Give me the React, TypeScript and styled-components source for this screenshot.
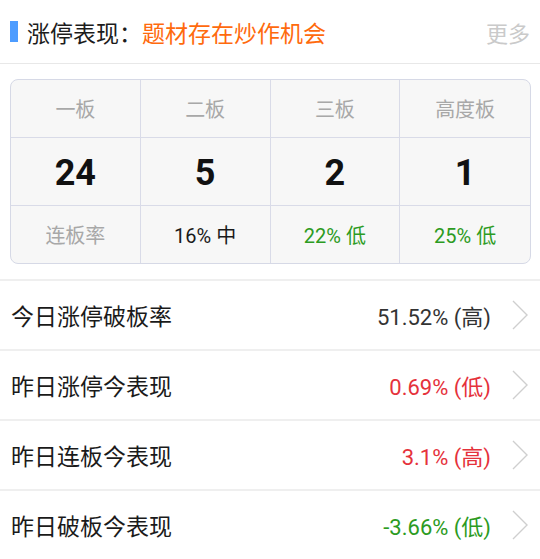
import React from "react";
import styled, { createGlobalStyle } from "styled-components";

const Global = createGlobalStyle`
  html, body { margin: 0; padding: 0; background: #fff; }
  body { font-family: Roboto, "Noto Sans CJK SC", sans-serif; -webkit-font-smoothing: antialiased; }
  * { box-sizing: border-box; }
`;

const Page = styled.div`
  width: 540px;
  background: #fff;
`;

const Header = styled.div`
  height: 64px;
  display: flex;
  align-items: center;
  padding: 0 10px 0 10px;
  border-bottom: 1px solid #e8e8e8;
`;

const Bar = styled.span`
  width: 8px;
  height: 21px;
  background: #4d9cff;
  margin-right: 9px;
  flex: none;
`;

const Title = styled.span<{ $accent?: boolean }>`
  font-size: 23px;
  color: ${(p) => (p.$accent ? "#ff6a0d" : "#1c1c1c")};
  white-space: nowrap;
`;

const More = styled.span`
  margin-left: auto;
  font-size: 22px;
  color: #cacaca;
`;

const TableWrap = styled.div`
  padding: 15px 9px 15px 10px;
`;

const Table = styled.div`
  display: grid;
  grid-template-columns: repeat(4, 1fr);
  grid-template-rows: 58px 68px 57px;
  border: 1px solid #d6d9e6;
  border-radius: 8px;
  background: #f7f7f7;
  overflow: hidden;
`;

type Tone = "label" | "num" | "dark" | "green";

const toneColor: Record<Tone, string> = {
  label: "#a8a8a8",
  num: "#111",
  dark: "#1a1a1a",
  green: "#2c9b22",
};

const Cell = styled.div<{ $tone: Tone; $last: boolean; $bottom: boolean }>`
  display: flex;
  align-items: center;
  justify-content: center;
  border-right: ${(p) => (p.$last ? "none" : "1px solid #d9dbe8")};
  border-bottom: ${(p) => (p.$bottom ? "none" : "1px solid #d9dbe8")};
  color: ${(p) => toneColor[p.$tone]};
  font-size: ${(p) => (p.$tone === "num" ? "36px" : "20px")};
  font-weight: ${(p) => (p.$tone === "num" ? 700 : 400)};
  padding-top: ${(p) => (p.$tone === "num" ? "2px" : "0")};
`;

const List = styled.div`
  display: flex;
  flex-direction: column;
`;

const Row = styled.div`
  height: 70px;
  border-top: 2px solid #efefef;
  display: flex;
  align-items: center;
  padding: 0 12px 0 11px;
`;

const Label = styled.span`
  font-size: 23px;
  color: #1a1a1a;
`;

type VTone = "neutral" | "red" | "green";
const vColor: Record<VTone, string> = {
  neutral: "#333",
  red: "#e5323b",
  green: "#2c9b22",
};

const Value = styled.span<{ $tone: VTone }>`
  margin-left: auto;
  font-size: 22px;
  color: ${(p) => vColor[p.$tone]};
  margin-right: 21px;
`;

const Chevron = () => (
  <svg width="16" height="30" viewBox="0 0 16 30" style={{ flex: "none" }}>
    <polyline points="1,1 15,15 1,29" fill="none" stroke="#cfcfcf" strokeWidth="1.4" />
  </svg>
);

const table: { text: string; tone: Tone }[][] = [
  [
    { text: "一板", tone: "label" },
    { text: "二板", tone: "label" },
    { text: "三板", tone: "label" },
    { text: "高度板", tone: "label" },
  ],
  [
    { text: "24", tone: "num" },
    { text: "5", tone: "num" },
    { text: "2", tone: "num" },
    { text: "1", tone: "num" },
  ],
  [
    { text: "连板率", tone: "label" },
    { text: "16% 中", tone: "dark" },
    { text: "22% 低", tone: "green" },
    { text: "25% 低", tone: "green" },
  ],
];

const rows: { label: string; value: string; tone: VTone }[] = [
  { label: "今日涨停破板率", value: "51.52% (高)", tone: "neutral" },
  { label: "昨日涨停今表现", value: "0.69% (低)", tone: "red" },
  { label: "昨日连板今表现", value: "3.1% (高)", tone: "red" },
  { label: "昨日破板今表现", value: "-3.66% (低)", tone: "green" },
];

export default function App() {
  return (
    <Page>
      <Global />
      <Header>
        <Bar />
        <Title>涨停表现：</Title>
        <Title $accent>题材存在炒作机会</Title>
        <More>更多</More>
      </Header>
      <TableWrap>
        <Table>
          {table.map((r, ri) =>
            r.map((c, ci) => (
              <Cell
                key={`${ri}-${ci}`}
                $tone={c.tone}
                $last={ci === 3}
                $bottom={ri === table.length - 1}
              >
                {c.text}
              </Cell>
            ))
          )}
        </Table>
      </TableWrap>
      <List>
        {rows.map((r) => (
          <Row key={r.label}>
            <Label>{r.label}</Label>
            <Value $tone={r.tone}>{r.value}</Value>
            <Chevron />
          </Row>
        ))}
      </List>
    </Page>
  );
}
